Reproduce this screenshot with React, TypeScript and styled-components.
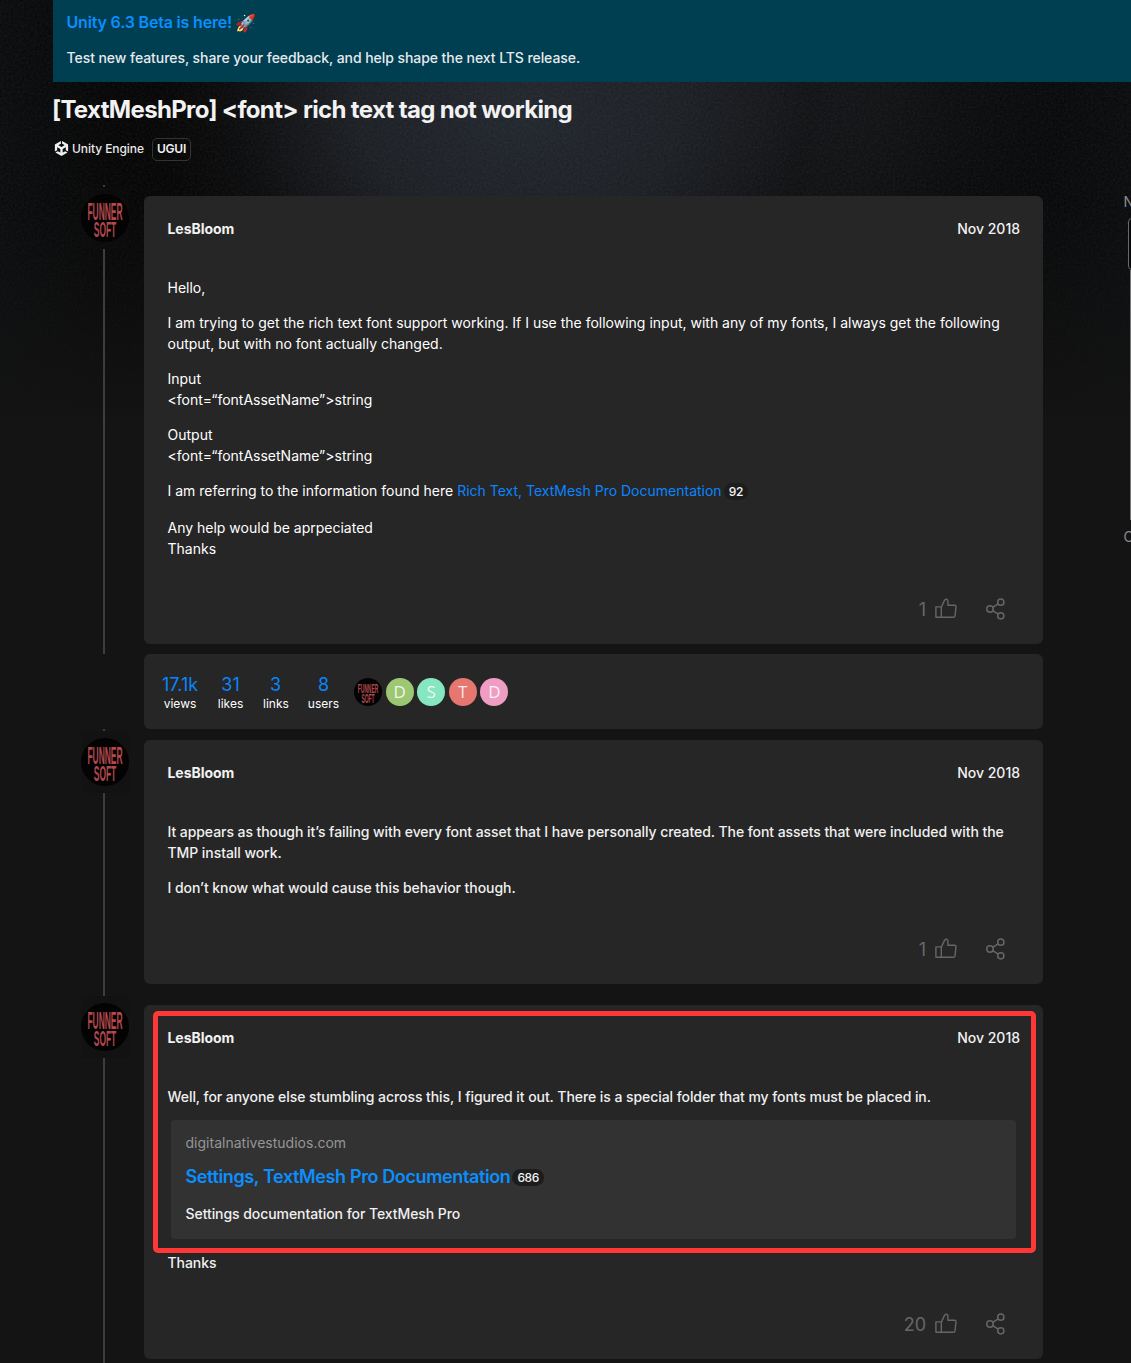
import React from "react";
import styled, { createGlobalStyle } from "styled-components";

const GlobalStyle = createGlobalStyle`
  *, *::before, *::after { box-sizing: border-box; }
  html { background: #141414; }
  body {
    margin: 0;
    overflow: hidden;
    font-family: Inter, "Liberation Sans", sans-serif;
    font-size: 14px;
    line-height: 21px;
    color: #f2f2f2;
  }
  p, h1, h2, h3 { margin: 0; }
`;

const Page = styled.div`
  position: relative;
  height: 1363px;
  overflow: hidden;
  display: flex;
  background:
    linear-gradient(to bottom, rgba(20, 20, 20, 0) 200px, #141414 430px),
    radial-gradient(ellipse 360px 270px at 520px 110px, #1f242b 0%, #191c21 45%, rgba(11, 12, 14, 0.6) 80%, rgba(4, 4, 5, 0) 100%),
    radial-gradient(ellipse 300px 260px at 760px 90px, #16181c 0%, rgba(4, 4, 5, 0) 100%),
    linear-gradient(to right, #06080a 0, #020202 110px, #020202 950px, #06080a 1131px);
`;

const Grain = styled.svg`
  position: absolute;
  inset: 0;
  width: 100%;
  height: 420px;
  opacity: 0.09;
  mask-image: linear-gradient(to bottom, #000 45%, transparent);
`;

const Main = styled.main`
  position: relative;
  width: 1078px;
  margin-left: 53px;
  flex: none;
`;

const Banner = styled.aside`
  height: 82px;
  padding: 11px 14px 0 13.5px;
  background: #003e52;
  color: #e6eaec;
  font-weight: 500;
  letter-spacing: -0.06px;
`;

const BannerTitle = styled.h3`
  display: flex;
  align-items: center;
  gap: 4px;
  height: 22px;
  margin-bottom: 14px;
  font-size: 16px;
  font-weight: 600;
  letter-spacing: -0.18px;
  color: #0a8fff;
`;

const Emoji = styled.span`
  font-size: 17px;
  letter-spacing: 0;
  padding-top: 2px;
  margin-left: -1px;
`;

const Title = styled.h1`
  margin: 12px 0 0 -1px;
  font-size: 24px;
  line-height: 32px;
  font-weight: 650;
  letter-spacing: -0.66px;
`;

const Tags = styled.div`
  display: flex;
  align-items: center;
  height: 22px;
  margin-top: 12px;
  font-size: 12px;
  font-weight: 500;
`;

const Category = styled.span`
  display: flex;
  align-items: center;
  gap: 3px;
  margin: -2px 0 0 1px;
  color: #e8e8e8;
  letter-spacing: -0.07px;
`;

const Tag = styled.span`
  height: 23px;
  margin-left: 8px;
  padding: 0 4px;
  line-height: 20px;
  border: 1px solid #333;
  border-radius: 5px;
  font-weight: 600;
  letter-spacing: -0.2px;
`;

const Stream = styled.div`
  width: 962px;
  margin: 25px 0 0 28px;
`;

const Row = styled.article<{ $tail?: number }>`
  display: flex;
  & > section { margin-bottom: ${(p) => p.$tail ?? 0}px; }
`;

const Gutter = styled.div`
  width: 48px;
  margin-right: 15px;
  display: flex;
  flex-direction: column;
`;

const Stub = styled.i`
  width: 2px;
  height: 2px;
  margin-left: 22px;
  background: #3d3d3d;
`;

const AvatarSlot = styled.div`
  height: 62px;
  padding-top: 7px;
  background: rgba(18, 18, 18, 0.3);
`;

const Line = styled.i`
  width: 2px;
  flex: 1;
  margin-left: 22px;
  background: #3d3d3d;
`;

const Card = styled.section<{ $top: number; $h: number; $plain?: boolean }>`
  position: relative;
  width: 899px;
  height: ${(p) => p.$h}px;
  margin-top: ${(p) => p.$top}px;
  padding: 22px 23px 0 23.5px;
  border-radius: 6px;
  background: #262626;
  color: ${(p) => (p.$plain ? "#fff" : "#f0f0f0")};
  font-weight: ${(p) => (p.$plain ? 400 : 500)};
  letter-spacing: ${(p) => (p.$plain ? "0" : "-0.067px")};
  display: flex;
  flex-direction: column;
`;

const Head = styled.header`
  display: flex;
  justify-content: space-between;
  margin-bottom: 38px;
  color: #f2f2f2;
  font-weight: 500;
  letter-spacing: 0;
  & > strong { font-weight: 700; letter-spacing: -0.05px; }
`;

const Para = styled.p<{ $gap?: number }>`
  margin-bottom: ${(p) => p.$gap ?? 14}px;
`;

const Link = styled.a`
  color: #0a84ff;
`;

const Clicks = styled.span<{ $tight?: boolean }>`
  display: inline-block;
  height: 17px;
  margin-left: 2px;
  padding: 0 5px;
  border-radius: 9px;
  background: #1c1c1c;
  color: #f4f4f4;
  font-size: 12px;
  line-height: 17px;
  font-weight: 500;
  letter-spacing: ${(p) => (p.$tight ? "-0.45px" : "-0.2px")};
  vertical-align: ${(p) => (p.$tight ? "1px" : "baseline")};
`;

const Actions = styled.footer`
  display: flex;
  align-items: center;
  justify-content: flex-end;
  height: 24px;
  margin-top: auto;
  margin-bottom: 23px;
  padding-right: 14px;
  color: #666;
  font-size: 18px;
  font-weight: 400;
  letter-spacing: 0;
  svg { margin-left: 9px; }
  svg + svg { margin-left: 29px; }
`;

const Stats = styled(Card)`
  flex-direction: row;
  padding: 21px 0 0 18px;
`;

const Stat = styled.div<{ $w: number }>`
  width: ${(p) => p.$w}px;
  text-align: center;
  font-size: 12px;
  line-height: 17px;
  & > b { display: block; font-size: 18px; line-height: 20px; font-weight: 400; color: #0a84ff; }
`;

const Faces = styled.div`
  display: flex;
  gap: 3.6px;
  margin: 3px 0 0 -5px;
`;

const Face = styled.span<{ $bg: string }>`
  width: 28px;
  height: 28px;
  border-radius: 50%;
  background: ${(p) => p.$bg};
  color: rgba(255, 255, 255, 0.85);
  font: 400 17px/28px "Open Sans", sans-serif;
  text-align: center;
`;

const Onebox = styled.blockquote`
  width: 845px;
  height: 119px;
  margin: 3px 0 13px 3.5px;
  padding: 12px 14.5px;
  border-radius: 4px;
  background: #323232;
`;

const Source = styled.p`
  color: #969696;
  font-weight: 400;
  letter-spacing: 0.01px;
`;

const OneboxTitle = styled.h3`
  margin: 12px 0 14px;
  font-size: 18px;
  line-height: 24px;
  font-weight: 600;
  letter-spacing: -0.38px;
  color: #0a8fff;
`;

const Highlight = styled.div`
  position: absolute;
  left: 9px;
  top: 6px;
  width: 883px;
  height: 242px;
  border: 5px solid #ff3737;
  border-radius: 5px;
`;

const Timeline = styled.nav`
  position: absolute;
  left: 1123.5px;
  top: 191px;
  width: 60px;
  color: #8c8c8c;
`;

const Handle = styled.div`
  height: 52px;
  margin: 6px 0 0 4.5px;
  border: 1px solid #6a6a6a;
  border-radius: 4px;
  background: #080808;
`;

const Track = styled.div`
  height: 250px;
  margin: 0 0 6px 6.5px;
  border-left: 1px solid #777;
`;

const Avatar = ({ size }: { size: number }) => (
  <svg width={size} height={size} viewBox="0 0 48 48">
    <circle cx="24" cy="24" r="24" fill="#030303" />
    <g fill="#b5484d" fontFamily="'Liberation Sans', sans-serif" fontWeight="700" textAnchor="middle">
      <text transform="translate(24 25.5) scale(.4 1)" fontSize="23.5" textLength="88" lengthAdjust="spacingAndGlyphs">FUNNER</text>
      <text transform="translate(24 42.5) scale(.4 1)" fontSize="22" textLength="56" lengthAdjust="spacingAndGlyphs">SOFT</text>
    </g>
  </svg>
);

const Like = () => (
  <svg width="22" height="22" viewBox="0 0 22 22" fill="none" stroke="#666" strokeWidth="1.4" strokeLinejoin="round">
    <path d="M.9 8.9h5.4v10.4H.9zM6.3 9.1 9.5 2.4c.3-.8.8-1.2 1.5-1.2 1.2 0 1.9.9 1.9 2.1v3.9h6.6c1 0 1.6.7 1.5 1.6l-1 9c-.1.9-.7 1.5-1.6 1.5H6.3" />
  </svg>
);

const Share = () => (
  <svg width="20" height="22" viewBox="0 0 20 22" fill="none" stroke="#666" strokeWidth="1.5">
    <circle cx="4" cy="11" r="3.2" />
    <circle cx="14.8" cy="4.2" r="3.1" />
    <circle cx="14.8" cy="17.8" r="3.1" />
    <path d="m6.7 9.3 5.5-3.4M6.7 12.7l5.5 3.4" />
  </svg>
);

const UnityMark = () => (
  <svg width="15" height="15" viewBox="0 0 24 24" fill="#f0f0f0">
    <path d="m12.9288 4.2939 3.7997 2.1929c.1366.077.1415.2905 0 .3675l-4.515 2.6076a.4192.4192 0 0 1-.4246 0L7.274 6.8543c-.139-.0745-.1415-.293 0-.3675l3.7972-2.193V0L1.3758 5.5977V16.793l3.7177-2.1456v-4.3858c-.0025-.1565.1813-.2682.318-.1838l4.5148 2.6076a.4252.4252 0 0 1 .2136.3676v5.2127c.0025.1565-.1813.2682-.3179.1838l-3.7996-2.1929-3.7178 2.1457L12 24l9.6954-5.5977-3.7178-2.1457-3.7996 2.1929c-.1341.082-.3229-.0248-.3179-.1838V13.053c0-.1565.087-.2956.2136-.3676l4.5149-2.6076c.134-.082.3228.0224.3179.1838v4.3858l3.7177 2.1456V5.5977L12.9288 0Z" />
  </svg>
);

function PostActions({ likes }: { likes: number }) {
  return (
    <Actions>
      {likes}
      <Like />
      <Share />
    </Actions>
  );
}

function PostHead() {
  return (
    <Head>
      <strong>LesBloom</strong>
      <span>Nov 2018</span>
    </Head>
  );
}

function Rail({ stub }: { stub?: boolean }) {
  return (
    <Gutter>
      {stub && <Stub />}
      <AvatarSlot>
        <Avatar size={48} />
      </AvatarSlot>
      <Line />
    </Gutter>
  );
}

const stats = [
  { n: "17.1k", label: "views", w: 36 },
  { n: "31", label: "likes", w: 65 },
  { n: "3", label: "links", w: 25 },
  { n: "8", label: "users", w: 71 },
];

const faces = [
  ["D", "#9dc873"],
  ["S", "#85e6c0"],
  ["T", "#e57670"],
  ["D", "#f09dc3"],
];

export default function App() {
  return (
    <Page>
      <GlobalStyle />
      <Grain>
        <filter id="grain">
          <feTurbulence type="fractalNoise" baseFrequency="0.45" numOctaves="2" />
          <feColorMatrix type="saturate" values="0" />
        </filter>
        <rect width="100%" height="100%" filter="url(#grain)" />
      </Grain>
      <Main>
        <Banner>
          <BannerTitle>
            Unity 6.3 Beta is here! <Emoji>🚀</Emoji>
          </BannerTitle>
          <p>Test new features, share your feedback, and help shape the next LTS release.</p>
        </Banner>
        <Title>[TextMeshPro] &lt;font&gt; rich text tag not working</Title>
        <Tags>
          <Category>
            <UnityMark />
            Unity Engine
          </Category>
          <Tag>UGUI</Tag>
        </Tags>
        <Stream>
          <Row $tail={10}>
            <Rail stub />
            <Card $top={11} $h={448} $plain>
              <PostHead />
              <Para>Hello,</Para>
              <Para>
                I am trying to get the rich text font support working. If I use the following input, with any of my fonts, I always get the following output, but with no font actually changed.
              </Para>
              <Para>
                Input
                <br />
                &lt;font=“fontAssetName”&gt;string
              </Para>
              <Para>
                Output
                <br />
                &lt;font=“fontAssetName”&gt;string
              </Para>
              <Para $gap={16}>
                I am referring to the information found here <Link>Rich Text, TextMesh Pro Documentation</Link>
                <Clicks>92</Clicks>
              </Para>
              <Para>
                Any help would be aprpeciated
                <br />
                Thanks
              </Para>
              <PostActions likes={1} />
            </Card>
          </Row>
          <Row>
            <Gutter />
            <Stats $top={0} $h={75} $plain>
              {stats.map((s) => (
                <Stat key={s.label} $w={s.w}>
                  <b>{s.n}</b>
                  {s.label}
                </Stat>
              ))}
              <Faces>
                <Avatar size={28} />
                {faces.map(([l, c], i) => (
                  <Face key={i} $bg={c}>
                    {l}
                  </Face>
                ))}
              </Faces>
            </Stats>
          </Row>
          <Row $tail={12}>
            <Rail stub />
            <Card $top={11} $h={244}>
              <PostHead />
              <Para>
                It appears as though it’s failing with every font asset that I have personally created. The font assets that were included with the TMP install work.
              </Para>
              <Para>I don’t know what would cause this behavior though.</Para>
              <PostActions likes={1} />
            </Card>
          </Row>
          <Row $tail={20}>
            <Rail />
            <Card $top={9} $h={354}>
              <PostHead />
              <Para $gap={10}>
                Well, for anyone else stumbling across this, I figured it out. There is a special folder that my fonts must be placed in.
              </Para>
              <Onebox>
                <Source>digitalnativestudios.com</Source>
                <OneboxTitle>
                  Settings, TextMesh Pro Documentation
                  <Clicks $tight>686</Clicks>
                </OneboxTitle>
                <p>Settings documentation for TextMesh Pro</p>
              </Onebox>
              <Para>Thanks</Para>
              <PostActions likes={20} />
              <Highlight />
            </Card>
          </Row>
        </Stream>
      </Main>
      <Timeline>
        Nov
        <Handle />
        <Track />
        Oct
      </Timeline>
    </Page>
  );
}
